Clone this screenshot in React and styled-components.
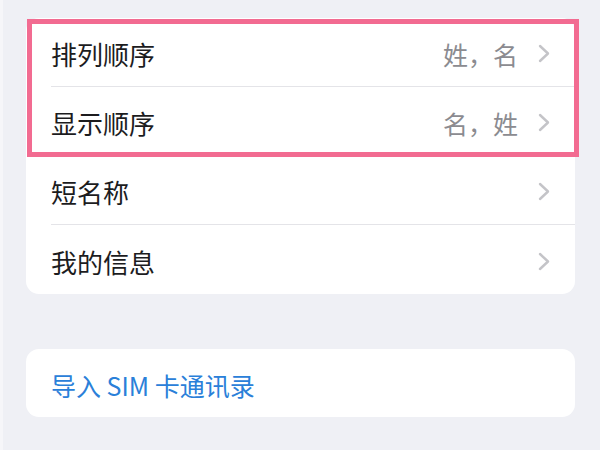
import React from "react";
import styled, { createGlobalStyle } from "styled-components";

const Global = createGlobalStyle`
  html, body { margin: 0; padding: 0; background: #eff0f5; }
  body { font-family: "Noto Sans CJK SC", "Noto Sans", sans-serif; }
`;

const Page = styled.div`
  width: 600px;
  height: 450px;
  box-sizing: border-box;
  padding: 18px 25px 0 26px;
  display: flex;
  flex-direction: column;
  gap: 55px;
  overflow: hidden;
  background: #eff0f5;
  border-left: 3px solid #f6f6f9;
  padding-left: 23px;
`;

const Card = styled.div`
  position: relative;
  background: #ffffff;
  border-radius: 13px;
  display: flex;
  flex-direction: column;
`;

const Row = styled.div`
  height: ${(p) => p.$h || 69}px;
  box-sizing: border-box;
  margin-left: 25px;
  padding-right: 25px;
  display: flex;
  align-items: center;
  padding-top: 3px;
  border-bottom: ${(p) => (p.$last ? "none" : "1.5px solid #e4e4e8")};
`;

const Label = styled.span`
  flex: 1;
  font-size: 26px;
  color: ${(p) => (p.$link ? "#2a80d9" : "#1c1c1e")};
  ${(p) => p.$link && "font-size: 25px;"}
  letter-spacing: 0px;
`;

const Value = styled.span`
  font-size: 25px;
  color: #8b8b90;
  margin-right: 20px;
`;

const Highlight = styled.div`
  position: absolute;
  left: 1px;
  top: 1px;
  width: 552px;
  height: 138px;
  box-sizing: border-box;
  border: 5px solid #f26b91;
  pointer-events: none;
`;

const Chevron = () => (
  <svg width="12" height="19" viewBox="0 0 12 19">
    <polyline
      points="2,2 10,9.5 2,17"
      fill="none"
      stroke="#c4c4c8"
      strokeWidth="2.4"
      strokeLinecap="round"
      strokeLinejoin="round"
    />
  </svg>
);

const rows = [
  { label: "排列顺序", value: "姓，名" },
  { label: "显示顺序", value: "名，姓" },
  { label: "短名称" },
  { label: "我的信息" },
];

export default function App() {
  return (
    <>
      <Global />
      <Page>
        <Card>
          {rows.map((r, i) => (
            <Row key={r.label} $last={i === rows.length - 1}>
              <Label>{r.label}</Label>
              {r.value && <Value>{r.value}</Value>}
              <Chevron />
            </Row>
          ))}
          <Highlight />
        </Card>
        <Card>
          <Row $last $h={68}>
            <Label $link>导入 SIM 卡通讯录</Label>
          </Row>
        </Card>
      </Page>
    </>
  );
}
